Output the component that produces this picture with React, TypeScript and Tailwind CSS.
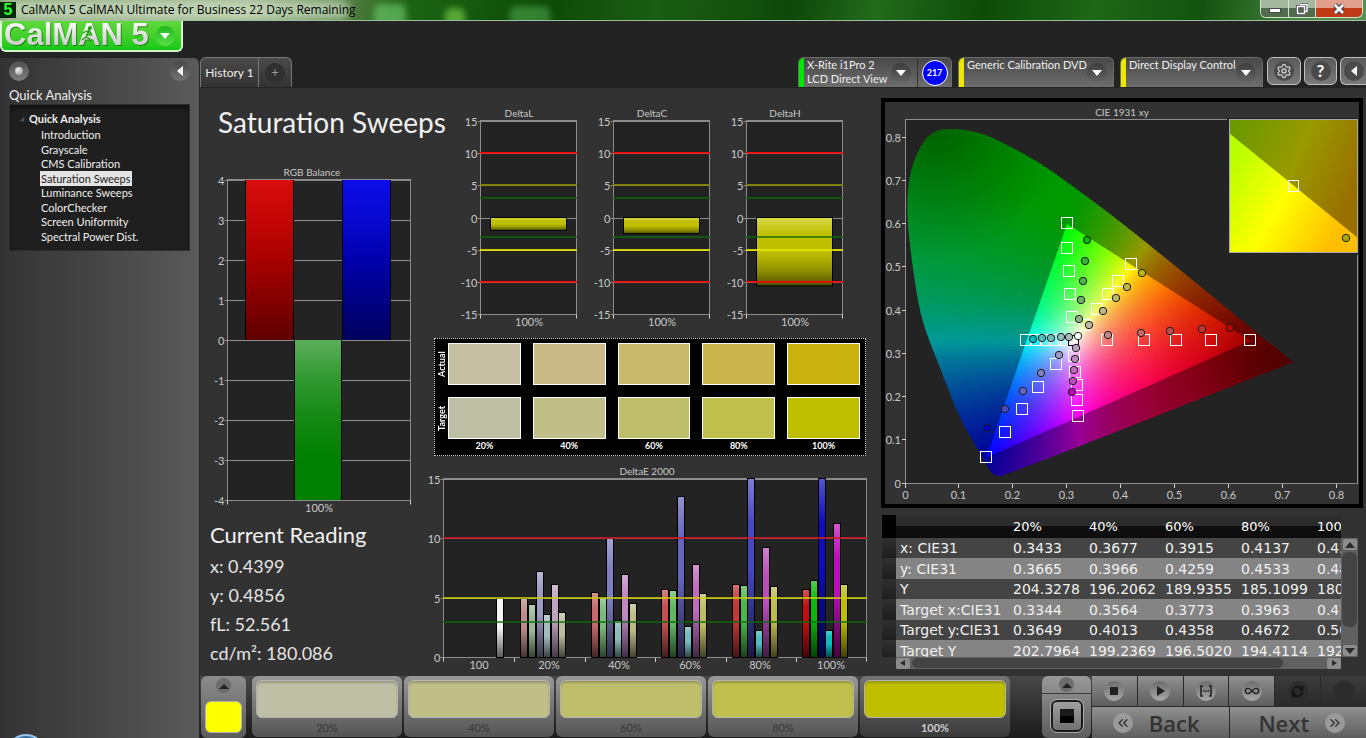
import type { ReactNode } from 'react';
import {
  ChevronsLeft,
  ChevronsRight,
  Infinity as InfinityIcon,
  RefreshCw,
  Settings,
} from 'lucide-react';

type Point = [number, number];

interface Scale {
  (value: number): number;
}

const GRID = '#8c8c8c';
const PLOT = '#232323';
const LABEL = '#c8c8c8';

const PAGES = [
  'Introduction',
  'Grayscale',
  'CMS Calibration',
  'Saturation Sweeps',
  'Luminance Sweeps',
  'ColorChecker',
  'Screen Uniformity',
  'Spectral Power Dist.',
];

const SWATCHES = [
  { label: '20%', actual: '#c6bea0', target: '#bfbfa5' },
  { label: '40%', actual: '#c9bb87', target: '#bfbf87' },
  { label: '60%', actual: '#c9b96b', target: '#bfbf6b' },
  { label: '80%', actual: '#cab54d', target: '#bfbf4d' },
  { label: '100%', actual: '#cab30f', target: '#bfbf00' },
];

const TABLE_COLUMNS = ['20%', '40%', '60%', '80%', '100%'];

const TABLE_ROWS = [
  { name: 'x: CIE31', values: ['0.3433', '0.3677', '0.3915', '0.4137', '0.4399'] },
  { name: 'y: CIE31', values: ['0.3665', '0.3966', '0.4259', '0.4533', '0.4856'] },
  { name: 'Y', values: ['204.3278', '196.2062', '189.9355', '185.1099', '180.0862'] },
  { name: 'Target x:CIE31', values: ['0.3344', '0.3564', '0.3773', '0.3963', '0.4193'] },
  { name: 'Target y:CIE31', values: ['0.3649', '0.4013', '0.4358', '0.4672', '0.5053'] },
  { name: 'Target Y', values: ['202.7964', '199.2369', '196.5020', '194.4114', '192.1470'] },
];

function VerticalGradient({ id, stops }: { id: string; stops: string[] }) {
  return (
    <linearGradient id={id} x1="0" y1="0" x2="0" y2="1">
      {stops.map((color, i) => (
        <stop key={i} offset={i / (stops.length - 1)} stopColor={color} />
      ))}
    </linearGradient>
  );
}

function ChartTitle({ x, y, children }: { x: number; y: number; children: ReactNode }) {
  return (
    <text x={x} y={y} fill={LABEL} textAnchor="middle" className="text-[10px]">
      {children}
    </text>
  );
}

function TickLabel({
  x,
  y,
  anchor = 'middle',
  children,
}: {
  x: number;
  y: number;
  anchor?: 'middle' | 'end';
  children: ReactNode;
}) {
  return (
    <text x={x} y={y} fill={LABEL} textAnchor={anchor} className="text-[11px]">
      {children}
    </text>
  );
}

// Frame, horizontal grid lines and left axis labels shared by the bar charts
function PlotFrame({
  left,
  right,
  top,
  bottom,
  ticks,
  scale,
}: {
  left: number;
  right: number;
  top: number;
  bottom: number;
  ticks: number[];
  scale: Scale;
}) {
  return (
    <g>
      <rect x={left} y={top} width={right - left} height={bottom - top} fill={PLOT} />
      {ticks.map((tick) => {
        const y = Math.floor(scale(tick)) + 0.5;
        return (
          <g key={tick}>
            <line x1={left - 3} x2={right} y1={y} y2={y} stroke={GRID} />
            <TickLabel x={left - 3} y={y + 4} anchor="end">
              {tick}
            </TickLabel>
          </g>
        );
      })}
      <rect
        x={left}
        y={top}
        width={right - left}
        height={bottom - top}
        fill="none"
        stroke={GRID}
      />
      <path d={`M${left} ${bottom}v4M${right} ${bottom}v4`} stroke="#d0d0d0" />
    </g>
  );
}

function RgbBalanceChart() {
  const scale: Scale = (v) => 180 - v * 40;
  return (
    <svg viewBox="0 0 228 360" className="mt-5 w-full" role="img" aria-label="RGB Balance">
      <defs>
        <VerticalGradient id="rgb-red" stops={['#d80c0c', '#c40606', '#a80000', '#840000', '#600000']} />
        <VerticalGradient id="rgb-green" stops={['#5caf5c', '#2f972f', '#128812', '#008000', '#008000']} />
        <VerticalGradient id="rgb-blue" stops={['#0c0ce8', '#0808d0', '#0000ac', '#000084', '#00005c']} />
      </defs>
      <ChartTitle x={112} y={16}>
        RGB Balance
      </ChartTitle>
      <PlotFrame
        left={27.5}
        right={210.5}
        top={19.5}
        bottom={340.5}
        ticks={[4, 3, 2, 1, 0, -1, -2, -3, -4]}
        scale={scale}
      />
      <rect x={45.5} y={20} width={48} height={160} fill="url(#rgb-red)" />
      <rect x={142.5} y={20} width={48} height={160} fill="url(#rgb-blue)" />
      <rect x={94.5} y={180} width={47} height={160} fill="url(#rgb-green)" />
      <path
        d="M45.5 20v160M93.5 20v160M142.5 20v160M190.5 20v160M94.5 180v160M141.5 180v160"
        stroke="#000"
      />
      <TickLabel x={119} y={352}>
        100%
      </TickLabel>
    </svg>
  );
}

const LIMITS = [
  { value: 10, color: '#ff0000', opacity: 1 },
  { value: 5, color: '#8a8a00', opacity: 0.85 },
  { value: 3, color: '#0a6b0a', opacity: 0.7 },
  { value: -3, color: '#0a6b0a', opacity: 0.7 },
  { value: -5, color: '#e6e600', opacity: 0.85 },
  { value: -10, color: '#ff0000', opacity: 1 },
];

function DeltaChart({ title, value }: { title: string; value: number }) {
  const scale: Scale = (v) => 113 - v * 6.45;
  const id = `delta-${title}`;
  return (
    <svg viewBox="0 0 133 225" className="w-full" role="img" aria-label={title}>
      <defs>
        <VerticalGradient id={id} stops={['#d8d84c', '#c0c000', '#c0c000', '#969600', '#505000']} />
      </defs>
      <ChartTitle x={67} y={12}>
        {title}
      </ChartTitle>
      <PlotFrame
        left={28.5}
        right={124.5}
        top={15.5}
        bottom={209.5}
        ticks={[15, 10, 5, 0, -5, -10, -15]}
        scale={scale}
      />
      <rect
        x={38.5}
        y={112.5}
        width={76}
        height={-value * 6.45}
        fill={`url(#${id})`}
        stroke="#000"
      />
      {LIMITS.map((limit) => (
        <rect
          key={limit.value}
          x={28}
          y={Math.floor(scale(limit.value)) - 1}
          width={97}
          height={Math.abs(limit.value) === 10 ? 1.6 : 2}
          fill={limit.color}
          opacity={limit.opacity}
        />
      ))}
      <TickLabel x={77} y={221}>
        100%
      </TickLabel>
    </svg>
  );
}

function SwatchPanel() {
  return (
    <div className="mr-[14px] ml-[6px] mt-2 grid h-[118px] grid-cols-[13px_1fr] grid-rows-[42px_42px_14px] gap-y-3 border border-dotted border-[#d0d0d0] bg-black pt-1 pr-[5px] text-[9px] font-bold text-white">
      <span className="flex rotate-180 items-center justify-center [writing-mode:vertical-rl]">
        Actual
      </span>
      <div className="grid grid-cols-5 gap-3">
        {SWATCHES.map((s) => (
          <div key={s.label} className="border border-white" style={{ backgroundColor: s.actual }} />
        ))}
      </div>
      <span className="flex rotate-180 items-center justify-center [writing-mode:vertical-rl]">
        Target
      </span>
      <div className="grid grid-cols-5 gap-3">
        {SWATCHES.map((s) => (
          <div key={s.label} className="border border-white" style={{ backgroundColor: s.target }} />
        ))}
      </div>
      <span className="-mt-3" />
      <div className="-mt-3 grid grid-cols-5 gap-3 pt-px text-center leading-3">
        {SWATCHES.map((s) => (
          <span key={s.label}>{s.label}</span>
        ))}
      </div>
    </div>
  );
}

// Red, green, blue, cyan, magenta, yellow for every saturation level
const DELTA_E = [
  {
    label: '20%',
    bars: [
      [4.9, '#c08a8a'], [4.45, '#96b896'], [7.2, '#9a9ac4'],
      [3.6, '#a4bcbc'], [6.1, '#bfa2bf'], [3.7, '#bcbca0'],
    ],
  },
  {
    label: '40%',
    bars: [
      [5.4, '#c46a6a'], [5.0, '#7cb87c'], [10, '#8080c0'],
      [3.1, '#8ebcbc'], [6.9, '#bf88bf'], [4.5, '#bcbc88'],
    ],
  },
  {
    label: '60%',
    bars: [
      [5.7, '#c45050'], [5.6, '#62b862'], [13.45, '#6666c0'],
      [2.6, '#74bcbc'], [7.8, '#bf6cbf'], [5.3, '#bcbc68'],
    ],
  },
  {
    label: '80%',
    bars: [
      [6.1, '#c43838'], [6.0, '#48b848'], [15, '#4848c0'],
      [2.25, '#54bcbc'], [9.2, '#bf4cbf'], [5.9, '#bcbc4c'],
    ],
  },
  {
    label: '100%',
    bars: [
      [5.65, '#c40c0c'], [6.4, '#0cb80c'], [15, '#0c0cc0'],
      [2.25, '#0cbcbc'], [11.2, '#bf0cbf'], [6.1, '#bcbc0c'],
    ],
  },
] as { label: string; bars: [number, string][] }[];

function DeltaEChart() {
  const scale: Scale = (v) => 193.5 - v * 11.9;
  const left = 15.5;
  const step = 70.5;

  const renderBar = (group: number, slot: number, value: number, color: string) => {
    const x = Math.round(left + group * step + 7.4 + slot * 7.6) - 0.5;
    const y = Math.round(scale(value)) - 0.5;
    const height = 193.5 - y;
    return (
      <g key={`${group}-${slot}`}>
        <rect x={x} y={y} width={7} height={height} fill={color} />
        <rect x={x} y={y} width={7} height={height} fill="url(#bar-shade)" stroke="#000" />
      </g>
    );
  };

  return (
    <svg viewBox="0 0 452 209" className="mt-2 w-full" role="img" aria-label="DeltaE 2000">
      <defs>
        <linearGradient id="bar-shade" x1="0" y1="0" x2="0" y2="1">
          <stop offset="0" stopColor="#fff" stopOpacity="0.3" />
          <stop offset="0.25" stopColor="#fff" stopOpacity="0" />
          <stop offset="0.5" stopColor="#000" stopOpacity="0" />
          <stop offset="1" stopColor="#000" stopOpacity="0.65" />
        </linearGradient>
      </defs>
      <ChartTitle x={219} y={11}>
        DeltaE 2000
      </ChartTitle>
      <PlotFrame
        left={left}
        right={438.5}
        top={14.5}
        bottom={193.5}
        ticks={[15, 10, 5, 0]}
        scale={scale}
      />
      {renderBar(0, 6, 4.9, '#f4f4f4')}
      {DELTA_E.map((group, g) =>
        group.bars.map(([value, color], slot) => renderBar(g + 1, slot, value, color))
      )}
      <rect x={15} y={73} width={424} height={2} fill="#c81c24" opacity={0.85} />
      <rect x={15} y={133} width={424} height={2} fill="#d2d200" opacity={0.75} />
      <rect x={15} y={157} width={424} height={2} fill="#0a6b0a" opacity={0.7} />
      {[1, 2, 3, 4, 5].map((i) => (
        <line
          key={i}
          x1={Math.round(left + i * step) + 0.5}
          x2={Math.round(left + i * step) + 0.5}
          y1={194}
          y2={198}
          stroke="#d0d0d0"
        />
      ))}
      <TickLabel x={51} y={205}>
        100
      </TickLabel>
      {DELTA_E.map((group, i) => (
        <TickLabel key={group.label} x={Math.round(50 + (i + 1) * step)} y={205}>
          {group.label}
        </TickLabel>
      ))}
    </svg>
  );
}

/* CIE 1931 diagram */

const cieX = (x: number) => 20.5 + x * 538.75;
const cieY = (y: number) => 381.5 - y * 432.5;

const WHITE: Point = [0.3127, 0.329];
const PRIMARIES: Point[] = [
  [0.64, 0.33],
  [0.3, 0.6],
  [0.15, 0.06],
];

// Spectral locus in plot pixels, starting at the red end
const LOCUS: Point[] = [
  [408, 260], [374, 233], [321, 189], [268, 146], [228, 114], [182, 80], [155, 61],
  [128, 46], [102, 33], [82, 28], [67, 27], [58, 27], [48, 30], [38, 40],
  [28, 60], [23, 83], [22, 116], [27, 160], [34, 206], [42, 233],
  [60, 278], [74, 315], [95, 351], [101, 362], [106, 370], [110, 374],
  [119, 374], [408, 260],
];

function smoothPath(points: Point[]) {
  let d = `M${points[0][0]} ${points[0][1]}`;
  for (let i = 1; i < points.length - 1; i++) {
    const [x, y] = points[i];
    const [nx, ny] = points[i + 1];
    d += `Q${x} ${y} ${(x + nx) / 2} ${(y + ny) / 2}`;
  }
  return `${d}L${points[0][0]} ${points[0][1]}Z`;
}

function chromaticityColor([x, y]: Point, level: number) {
  const z = 1 - x - y;
  const rgb = [
    3.2406 * x - 1.5372 * y - 0.4986 * z,
    -0.9689 * x + 1.8758 * y + 0.0415 * z,
    0.0557 * x - 0.204 * y + 1.057 * z,
  ].map((c) => Math.max(c, 0));
  const max = Math.max(...rgb);
  const [r, g, b] = rgb.map((c) => Math.round((255 * level * c) / max));
  return `rgb(${r},${g},${b})`;
}

// Distance from the white point to the edge of the gamut triangle
function edgeDistance(dx: number, dy: number) {
  let best = Infinity;
  PRIMARIES.forEach(([ax, ay], i) => {
    const [bx, by] = PRIMARIES[(i + 1) % 3];
    const ex = bx - ax;
    const ey = by - ay;
    const det = dx * ey - dy * ex;
    if (Math.abs(det) < 1e-9) return;
    const t = ((ax - WHITE[0]) * ey - (ay - WHITE[1]) * ex) / det;
    if (t > 0) best = Math.min(best, t);
  });
  return best;
}

const WEDGES = 300;
const OUTER_REACH = 0.45;
const INNER_STOPS = [0, 0.1, 0.2, 0.35, 0.5, 0.65, 0.8, 1];
const OUTER_STOPS = [0, 0.1, 0.2, 0.3, 0.45, 0.6, 0.8, 1];

const wedges = Array.from({ length: WEDGES }, (_, i) => {
  const a0 = (i / WEDGES) * Math.PI * 2;
  const a1 = ((i + 1) / WEDGES) * Math.PI * 2;
  const dx = Math.cos((a0 + a1) / 2);
  const dy = Math.sin((a0 + a1) / 2);
  const edge = edgeDistance(dx, dy);
  const at = (t: number): Point => [WHITE[0] + dx * t, WHITE[1] + dy * t];
  const plot = ([x, y]: Point): Point => [cieX(x), cieY(y)];
  const far = (a: number) => plot([WHITE[0] + Math.cos(a), WHITE[1] + Math.sin(a)]).join(' ');
  return {
    path: `M${plot(WHITE).join(' ')}L${far(a0)}L${far(a1)}Z`,
    start: plot(WHITE),
    edge: plot(at(edge)),
    end: plot(at(edge + OUTER_REACH)),
    inner: INNER_STOPS.map((s) => chromaticityColor(at(edge * s), 1)),
    outer: OUTER_STOPS.map((s) => chromaticityColor(at(edge + OUTER_REACH * s), 0.6)),
  };
});

function HueGradient({
  id,
  from,
  to,
  offsets,
  colors,
}: {
  id: string;
  from: Point;
  to: Point;
  offsets: number[];
  colors: string[];
}) {
  return (
    <linearGradient
      id={id}
      gradientUnits="userSpaceOnUse"
      x1={from[0]}
      y1={from[1]}
      x2={to[0]}
      y2={to[1]}
    >
      {colors.map((color, i) => (
        <stop key={i} offset={offsets[i]} stopColor={color} />
      ))}
    </linearGradient>
  );
}

const TARGETS: Point[] = [
  [182, 121], [182, 146], [184, 169], [185, 192], [187, 215],
  [246, 162], [233, 179], [223, 192], [212, 207], [200, 223],
  [222, 238], [259, 238], [291, 238], [326, 238], [365, 238],
  [141, 238], [151, 238], [161, 238], [170, 238], [179, 238],
  [171, 262], [153, 285], [137, 307], [120, 330], [101, 355],
  [189, 254], [190, 270], [192, 283], [192, 298], [193, 314],
];

const READINGS: [number, number, string][] = [
  [202, 138, '#00b400'], [200, 159, '#34b434'], [198, 179, '#50b450'],
  [196, 198, '#6cb46c'], [194, 217, '#88b488'],
  [257, 171, '#b8b800'], [242, 185, '#bcb84c'], [231, 196, '#bcb86b'],
  [218, 209, '#bcb887'], [204, 223, '#bcb8a0'],
  [345, 226, '#c00000'], [317, 227, '#c03434'], [285, 229, '#c05050'],
  [256, 231, '#c06a6a'], [223, 233, '#c08a8a'],
  [148, 237, '#00bcbc'], [157, 236, '#54bcbc'], [166, 236, '#74bcbc'],
  [176, 235, '#8ebcbc'], [184, 235, '#a4bcbc'],
  [102, 326, '#0000c0'], [120, 307, '#4848c0'], [138, 289, '#6666c0'],
  [156, 271, '#8080c0'], [174, 253, '#9a9ac4'],
  [187, 290, '#bf00bf'], [188, 279, '#bf4cbf'], [189, 268, '#bf6cbf'],
  [190, 257, '#bf88bf'], [191, 246, '#bfa2bf'],
  [193, 234, '#ffffff'],
];

const CIE_TICKS = [0, 0.1, 0.2, 0.3, 0.4, 0.5, 0.6, 0.7, 0.8];

function CieChart() {
  const triangle = PRIMARIES.map(([x, y]) => `${cieX(x)},${cieY(y)}`).join(' ');
  return (
    <div className="mr-[3px] ml-px border-4 border-black">
      <svg viewBox="0 0 474 402" className="block w-full" role="img" aria-label="CIE 1931 xy">
        <defs>
          <clipPath id="locus">
            <path d={smoothPath(LOCUS)} />
          </clipPath>
          <clipPath id="gamut">
            <polygon points={triangle} />
          </clipPath>
          {wedges.map((w, i) => (
            <g key={i}>
              <HueGradient id={`in-${i}`} from={w.start} to={w.edge} offsets={INNER_STOPS} colors={w.inner} />
              <HueGradient id={`out-${i}`} from={w.edge} to={w.end} offsets={OUTER_STOPS} colors={w.outer} />
            </g>
          ))}
          <radialGradient id="dim-red" gradientUnits="userSpaceOnUse" cx="408" cy="260" r="150">
            <stop offset="0" stopOpacity="0.5" />
            <stop offset="0.3" stopOpacity="0.38" />
            <stop offset="0.6" stopOpacity="0.16" />
            <stop offset="1" stopOpacity="0" />
          </radialGradient>
          <radialGradient id="dim-green" gradientUnits="userSpaceOnUse" cx="50" cy="27" r="130">
            <stop offset="0" stopOpacity="0.36" />
            <stop offset="1" stopOpacity="0" />
          </radialGradient>
          <linearGradient id="inset-dark" x1="0" y1="0" x2="1" y2="0.45">
            <stop offset="0" stopColor="#669900" />
            <stop offset="0.55" stopColor="#999900" />
            <stop offset="1" stopColor="#997000" />
          </linearGradient>
          <linearGradient id="inset-light" gradientUnits="userSpaceOnUse" x1="345" y1="60" x2="456" y2="125">
            <stop offset="0" stopColor="#b8ff00" />
            <stop offset="0.5" stopColor="#ffff00" />
            <stop offset="1" stopColor="#ffbe00" />
          </linearGradient>
        </defs>

        <ChartTitle x={237} y={14}>
          CIE 1931 xy
        </ChartTitle>
        <rect x={20.5} y={17.5} width={452} height={364} fill={PLOT} stroke={GRID} />

        <g clipPath="url(#locus)">
          {wedges.map((w, i) => (
            <path key={i} d={w.path} fill={`url(#out-${i})`} stroke={`url(#out-${i})`} />
          ))}
          <g clipPath="url(#gamut)">
            {wedges.map((w, i) => (
              <path
                key={i}
                d={w.path}
                fill={`url(#in-${i})`}
                stroke={`url(#in-${i})`}
                strokeWidth={0.5}
              />
            ))}
          </g>
          <rect x={21} y={18} width={451} height={363} fill="url(#dim-red)" />
          <rect x={21} y={18} width={451} height={363} fill="url(#dim-green)" />
        </g>

        {TARGETS.map(([x, y], i) => (
          <rect key={i} x={x - 5.5} y={y - 5.5} width={11} height={11} fill="none" stroke="#fff" />
        ))}
        <rect x={183.5} y={233.5} width={10} height={10} fill="none" stroke="#000" />
        {READINGS.map(([x, y, color], i) => (
          <circle key={i} cx={x} cy={y} r={3.7} fill={color} stroke="#1c1c1c" />
        ))}

        {CIE_TICKS.map((tick) => {
          const x = Math.round(cieX(tick)) - 0.5;
          const y = Math.round(cieY(tick)) - 0.5;
          return (
            <g key={tick}>
              <path d={`M${x} 382v4M17 ${y}h4`} stroke="#d0d0d0" />
              <TickLabel x={x} y={397}>
                {tick}
              </TickLabel>
              <TickLabel x={16} y={y + 4} anchor="end">
                {tick}
              </TickLabel>
            </g>
          );
        })}

        {/* magnified view of the selected point */}
        <g>
          <rect x={342} y={16} width={132} height={137} fill={PLOT} />
          <rect x={344} y={17} width={129} height={134} fill="url(#inset-dark)" />
          <polygon points="344,31 473,136 473,151 344,151" fill="url(#inset-light)" />
          <rect x={344.5} y={17.5} width={128} height={133} fill="none" stroke="#a8a8a8" />
          <rect x={403.5} y={78.5} width={10} height={11} fill="none" stroke="#fff" />
          <circle cx={461} cy={136} r={3.7} fill="#a8a800" stroke="#1c1c1c" />
        </g>
      </svg>
    </div>
  );
}

function ReadingsTable() {
  return (
    <div className="mt-[7px] mr-2 ml-[2px] grid grid-cols-[minmax(0,1fr)_17px] text-[14px] text-[#f0f0f0] [font-family:'DejaVu_Sans',sans-serif]">
      <div className="col-start-1 row-start-1 h-[142px] overflow-hidden">
        <table className="w-[507px] table-fixed border-collapse text-left whitespace-nowrap">
          <thead>
            <tr className="h-[23px] bg-gradient-to-b from-[#2c2c2c] from-50% to-[#0e0e0e] to-50%">
              <th className="w-[14px] bg-black p-0" />
              <th className="w-[113px] p-0" />
              {TABLE_COLUMNS.map((c) => (
                <th key={c} className="w-[76px] p-0 pl-1 text-[13px] leading-5 font-normal text-white">
                  {c}
                </th>
              ))}
            </tr>
          </thead>
          <tbody>
            {TABLE_ROWS.map((row) => (
              <tr key={row.name} className="h-5 bg-[#444] even:h-[21px] even:bg-[#848484]">
                <td className="bg-gradient-to-b from-[#303030] to-[#1e1e1e] p-0" />
                <th scope="row" className="p-0 pl-1 leading-5 font-normal">
                  {row.name}
                </th>
                {row.values.map((v, i) => (
                  <td key={i} className="p-0 pl-1 leading-5">
                    {v}
                  </td>
                ))}
              </tr>
            ))}
          </tbody>
        </table>
      </div>
      <div className="col-start-2 row-start-1 mt-[23px] flex flex-col items-center bg-[#606060] py-px">
        <ScrollButton label="Scroll up" points="5,0 10,6 0,6" />
        <div className="mt-0.5 h-[75px] w-[15px] rounded-md bg-[#444]" />
        <div className="mt-auto">
          <ScrollButton label="Scroll down" points="0,0 10,0 5,6" />
        </div>
      </div>
      <div className="col-start-1 row-start-2 ml-[14px] flex h-3 items-center bg-[#606060]">
        <ScrollButton label="Scroll left" points="7,0 7,6 2,3" />
        <div className="mx-0.5 h-[10px] w-5/6 rounded-md bg-[#444]" />
        <div className="ml-auto flex">
          <ScrollButton label="Scroll right" points="3,0 3,6 8,3" />
        </div>
      </div>
    </div>
  );
}

function ScrollButton({ label, points }: { label: string; points: string }) {
  return (
    <button
      type="button"
      aria-label={label}
      className="flex h-[11px] w-[14px] items-center justify-center rounded-xs bg-[#8c8c8c]"
    >
      <svg viewBox="0 0 10 6" className="h-[6px] w-[10px]">
        <polygon points={points} fill="#2a2a2a" />
      </svg>
    </button>
  );
}

function Arrow({ direction }: { direction: 'down' | 'left' | 'up' }) {
  const shapes = {
    down: '0,2 10,2 5,8',
    left: '8,0 8,10 2,5',
    up: '0,8 10,8 5,3',
  };
  return (
    <svg viewBox="0 0 10 10" className="size-[10px]">
      <polygon points={shapes[direction]} fill="currentColor" />
    </svg>
  );
}

function TitleBar() {
  return (
    <header className="relative flex h-[21px] shrink-0 items-center overflow-hidden border-b border-[#9fc09f]">
      <div className="absolute inset-0 bg-[linear-gradient(100deg,#7f9f6c_0%,#9ab38a_18%,#4a7a3a_26%,#1d6414_30%,#0d4a08_40%,#1b5d14_48%,#0e480a_58%,#226a1c_64%,#0d4b09_72%,#1f6718_80%,#135210_88%,#4f8a48_96%,#5c8f56_100%)]" />
      <div className="absolute top-1 left-[374px] h-6 w-8 rounded-md bg-[#6fd06f] opacity-60 blur-[3px]" />
      <div className="absolute top-2 left-[445px] h-6 w-5 rounded-md bg-[#7fd84a] opacity-60 blur-[3px]" />
      <div className="absolute top-1.5 left-[510px] h-6 w-10 rounded-md bg-[#58b858] opacity-50 blur-[3px]" />
      <div className="absolute top-0 left-0 h-5 w-[350px] rounded-full bg-[#dcebd4] opacity-60 blur-[4px]" />
      <span className="relative mr-[5px] flex h-4 w-4 items-center justify-center bg-[#062806] text-[16px] leading-4 font-bold text-[#30ff30] [font-family:'Liberation_Sans',sans-serif]">
        5
      </span>
      <h1 className="relative text-[12px] leading-5 text-black [font-family:'Open_Sans',sans-serif]">
        CalMAN 5 CalMAN Ultimate for Business 22 Days Remaining
      </h1>
      <div className="relative mr-[3px] ml-auto flex h-[18px] self-start overflow-hidden rounded-b-md border border-t-0 border-[#d4e4d0]">
        <button
          type="button"
          aria-label="Minimize"
          className="flex w-7 items-center justify-center border-r border-[#d4e4d0] bg-gradient-to-b from-[#a4b8a0] from-45% to-[#506c4c] to-50%"
        >
          <span className="mt-1 h-[5px] w-3 border border-[#445] bg-white" />
        </button>
        <button
          type="button"
          aria-label="Restore"
          className="flex w-[27px] items-center justify-center border-r border-[#d4e4d0] bg-gradient-to-b from-[#a4b8a0] from-45% to-[#506c4c] to-50%"
        >
          <svg viewBox="0 0 12 12" className="size-3">
            <path d="M4 1.500h7v7h-2M1.500 3.500h7v7h-7z" fill="none" stroke="#445" strokeWidth="3" />
            <path d="M4 1.500h7v7h-2M1.500 3.500h7v7h-7z" fill="none" stroke="#fff" strokeWidth="1.500" />
          </svg>
        </button>
        <button
          type="button"
          aria-label="Close"
          className="flex w-[46px] items-center justify-center bg-gradient-to-b from-[#e0a08c] from-45% to-[#c03a18] to-50%"
        >
          <svg viewBox="0 0 14 12" className="h-3 w-[14px]">
            <path d="M3 2l8 8M11 2l-8 8" stroke="#445" strokeWidth="5" />
            <path d="M3 2l8 8M11 2l-8 8" stroke="#fff" strokeWidth="2.600" />
          </svg>
        </button>
      </div>
    </header>
  );
}

function LogoBar() {
  return (
    <div className="h-9 shrink-0">
      <button
        type="button"
        aria-label="CalMAN 5 menu"
        className="relative flex h-[31px] w-[183px] items-start rounded-b-md border-2 border-t-0 border-[#d8f8d0] bg-gradient-to-b from-[#5fd83c] to-[#10c814] pl-[2px] text-left"
      >
        <span className="bg-gradient-to-b from-white to-[#c4c4c4] bg-clip-text text-[31px] leading-[28px] font-bold whitespace-nowrap text-transparent [font-family:'Liberation_Sans',sans-serif] drop-shadow-[1px_1px_0_rgba(0,0,0,0.35)]">
          CalMAN 5
        </span>
        <svg viewBox="0 0 16 18" className="absolute top-1 left-[78px] h-[18px] w-4">
          <circle cx="10" cy="3" r="2" fill="#2a9c1c" />
          <path
            d="M3 8l4-2 3 1 2 3M8 7l-2 5 4 2v3M6 12l-4 3"
            fill="none"
            stroke="#2a9c1c"
            strokeWidth="1.300"
          />
        </svg>
        <span className="absolute top-[5px] right-[6px] flex size-5 items-center justify-center rounded-full bg-gradient-to-b from-[#18b818] to-[#58e048] text-white">
          <Arrow direction="down" />
        </span>
      </button>
    </div>
  );
}

function Sidebar() {
  return (
    <aside className="relative mt-px w-[200px] shrink-0 overflow-hidden rounded-tr-md border-r border-[#262626] bg-gradient-to-r from-[#333] to-[#5a5a5a] px-[9px]">
      <div className="flex items-center justify-between pt-[3px]">
        <span className="flex size-5 items-center justify-center rounded-full bg-gradient-to-b from-[#505050] to-[#808080]">
          <span className="size-2 rounded-full bg-[radial-gradient(circle_at_35%_35%,#f0f0f0,#888)]" />
        </span>
        <button
          type="button"
          aria-label="Collapse sidebar"
          className="flex size-5 items-center justify-center rounded-full bg-gradient-to-b from-[#484848] to-[#747474] text-white"
        >
          <Arrow direction="left" />
        </button>
      </div>
      <h2 className="pt-1 text-[13px] leading-5 text-[#eee]">Quick Analysis</h2>
      <nav className="mt-[-1px] h-[147px] border border-[#2c2c2c] bg-[#1f1f1f] pt-[7px] pl-[9px] text-[11px] text-[#eee] shadow-[inset_0_3px_4px_#111]">
        <div className="flex items-center leading-[14px] font-bold">
          <svg viewBox="0 0 8 8" className="mr-1 size-[6px]">
            <path d="M7 1v6H1z" fill="#555" />
          </svg>
          Quick Analysis
        </div>
        <ul className="pt-px pl-[21px]">
          {PAGES.map((page) => (
            <li key={page} className="-mb-px h-[15px] leading-[15px] [&:nth-child(odd)]:mb-0">
              <a
                href={`#${page}`}
                className={
                  page === 'Saturation Sweeps'
                    ? 'inline-block bg-[#e4e4e4] px-px text-[#222]'
                    : 'inline-block px-px'
                }
              >
                {page}
              </a>
            </li>
          ))}
        </ul>
      </nav>
      <div className="absolute -bottom-9 left-[6px] size-10 rounded-full border-2 border-[#9cc4e8] bg-[#3a6ea0]" />
    </aside>
  );
}

function DeviceButton({
  bar,
  width,
  lines,
  children,
}: {
  bar: string;
  width: string;
  lines: string[];
  children?: ReactNode;
}) {
  return (
    <div
      className={`flex h-[30px] overflow-hidden rounded-t-md border border-b-0 border-[#6c6c6c] bg-gradient-to-b from-[#484848] to-[#6e6e6e] ${width}`}
    >
      <button type="button" aria-haspopup="menu" className="flex min-w-0 flex-1 text-left">
        <span className={`mr-[3px] h-full w-[5px] shrink-0 ${bar}`} />
        <span className="flex-1 text-[11px] leading-[14px] whitespace-nowrap text-[#eee]">
          {lines.map((line) => (
            <span key={line} className="block">
              {line}
            </span>
          ))}
        </span>
        <span className="mt-[5px] mr-[6px] flex size-5 shrink-0 items-center justify-center rounded-full bg-gradient-to-b from-[#3c3c3c] to-[#666] text-white">
          <Arrow direction="down" />
        </span>
      </button>
      {children}
    </div>
  );
}

const squareButton =
  'flex h-7 items-center justify-center rounded-md border border-[#c0c0c0] bg-gradient-to-b from-[#5a5a5a] to-[#7a7a7a] text-white';

function TabRow() {
  return (
    <div className="flex h-[31px] shrink-0 items-start">
      <div className="flex h-[30px] rounded-t-md border border-b-0 border-[#777] bg-gradient-to-b from-[#4a4a4a] to-[#333]">
        <button type="button" className="w-[58px] border-r border-[#777] text-[12px] text-[#eee]">
          History 1
        </button>
        <button type="button" aria-label="Add history" className="flex w-8 items-center justify-center">
          <span className="flex size-5 items-center justify-center rounded-full bg-[#303030] text-[13px] text-[#999]">
            +
          </span>
        </button>
      </div>
      <div className="ml-auto flex items-start">
        <DeviceButton bar="bg-[#00e800]" width="w-[154px]" lines={['X-Rite i1Pro 2', 'LCD Direct View']}>
          <div className="flex w-[34px] shrink-0 items-center justify-center border-l border-[#333]">
            <span className="flex size-[26px] items-center justify-center rounded-full border border-white bg-[#0000ff] text-[9px] font-bold text-white">
              217
            </span>
          </div>
        </DeviceButton>
        <div className="ml-1.5 flex">
          <DeviceButton bar="bg-[#ece800]" width="w-[156px]" lines={['Generic Calibration DVD']} />
        </div>
        <div className="ml-1.5 flex">
          <DeviceButton bar="bg-[#ece800]" width="w-[143px]" lines={['Direct Display Control']} />
        </div>
        <button type="button" aria-label="Settings" className={`ml-1 w-[34px] ${squareButton}`}>
          <span className="flex size-5 items-center justify-center rounded-full bg-[#4a4a4a]">
            <Settings className="size-4 text-[#ccc]" />
          </span>
        </button>
        <button type="button" aria-label="Help" className={`ml-[3px] w-[33px] ${squareButton}`}>
          <span className="flex size-5 items-center justify-center rounded-full bg-[#4a4a4a] text-[17px] leading-5 font-bold">
            ?
          </span>
        </button>
        <button
          type="button"
          aria-label="Collapse toolbar"
          className={`ml-[3px] w-[26px] rounded-r-none border-r-0 ${squareButton}`}
        >
          <span className="flex size-5 items-center justify-center rounded-full bg-[#4a4a4a]">
            <Arrow direction="left" />
          </span>
        </button>
      </div>
    </div>
  );
}

function TransportButton({
  label,
  disabled = false,
  children,
}: {
  label: string;
  disabled?: boolean;
  children?: ReactNode;
}) {
  return (
    <button
      type="button"
      aria-label={label}
      disabled={disabled}
      className={
        disabled
          ? 'flex items-center justify-center bg-gradient-to-b from-[#3c3c3c] to-[#2a2a2a] text-[#161616]'
          : 'flex items-center justify-center bg-gradient-to-b from-[#909090] to-[#5e5e5e] text-[#222]'
      }
    >
      <span
        className={
          disabled
            ? 'flex size-5 items-center justify-center rounded-full bg-[#2c2c2c]'
            : 'flex size-5 items-center justify-center rounded-full bg-gradient-to-b from-[#6c6c6c] to-[#a8a8a8]'
        }
      >
        {children}
      </span>
    </button>
  );
}

function BottomBar() {
  return (
    <footer className="mt-auto flex h-[62px] shrink-0 bg-gradient-to-b from-[#484848] to-[#1c1c1c]">
      <button
        type="button"
        aria-label="Current patch"
        className="ml-px flex w-[45px] shrink-0 flex-col items-center rounded-md bg-gradient-to-b from-[#8c8c8c] to-[#5c5c5c]"
      >
        <span className="mt-[2px] flex size-[15px] items-center justify-center rounded-full bg-[#6c6c6c] text-[#222]">
          <Arrow direction="up" />
        </span>
        <span className="mt-2 h-8 w-[37px] rounded-md border border-[#b0b0b0] bg-[#ffff00]" />
      </button>
      <div className="ml-1.5 flex min-w-0 flex-1 gap-0.5">
        {SWATCHES.map((s) => {
          const selected = s.label === '100%';
          return (
            <button
              key={s.label}
              type="button"
              className={
                selected
                  ? 'flex h-[61px] flex-1 flex-col rounded-md bg-gradient-to-b from-[#747474] to-[#3a3a3a] px-1 pt-1 text-[11px] font-bold text-[#ccc]'
                  : 'flex h-[61px] flex-1 flex-col rounded-md bg-gradient-to-b from-[#999] to-[#545454] px-1 pt-1 text-[11px] text-[#3a3a3a]'
              }
            >
              <span
                className="h-[38px] w-full rounded-md border border-[#b4b4b4] shadow-[inset_0_2px_2px_rgba(0,0,0,0.2)]"
                style={{ backgroundColor: s.target }}
              />
              <span className="w-full pt-0.5 leading-4">{s.label}</span>
            </button>
          );
        })}
      </div>
      <div className="ml-8 flex w-[324px] shrink-0">
        <div className="flex w-[49px] flex-col rounded-md bg-gradient-to-b from-[#999] to-[#5c5c5c]">
          <button
            type="button"
            aria-label="Expand"
            className="flex h-[18px] items-center justify-center border-b border-[#3a3a3a] text-[#222]"
          >
            <span className="flex size-[15px] items-center justify-center rounded-full bg-[#6c6c6c]">
              <Arrow direction="up" />
            </span>
          </button>
          <button type="button" aria-label="Pattern window" className="flex flex-1 items-center justify-center">
            <span className="flex size-[32px] items-center justify-center rounded-md border-2 border-[#1c1c1c] bg-gradient-to-b from-[#a0a0a0] to-[#707070] outline outline-[#aaa]">
              <span className="size-[14px] bg-gradient-to-b from-[#1a1a1a] from-50% to-black to-50%" />
            </span>
          </button>
        </div>
        <div className="ml-px grid flex-1 grid-rows-[30px_31px] gap-px bg-[#2a2a2a]">
          <div className="grid grid-cols-6 gap-px">
            <TransportButton label="Stop">
              <span className="size-2 bg-[#222]" />
            </TransportButton>
            <TransportButton label="Play">
              <svg viewBox="0 0 10 12" className="ml-0.5 h-3 w-[10px]">
                <path d="M1 1l8 5-8 5z" fill="currentColor" />
              </svg>
            </TransportButton>
            <TransportButton label="Read series">
              <svg viewBox="0 0 14 12" className="h-3 w-[14px]" fill="none" stroke="currentColor" strokeWidth="1.600">
                <path d="M4 1H2v10h2M10 1h2v10h-2" />
                <path d="M4 6h6" strokeDasharray="1.500 0.800" />
              </svg>
            </TransportButton>
            <TransportButton label="Read continuously">
              <InfinityIcon className="size-4" />
            </TransportButton>
            <TransportButton label="Refresh" disabled>
              <RefreshCw className="size-[13px]" strokeWidth={4} />
            </TransportButton>
            <TransportButton label="Unused" disabled />
          </div>
          <div className="grid grid-cols-2 gap-px text-[22px] text-[#333] [font-family:'Open_Sans',sans-serif]">
            <button
              type="button"
              className="flex items-center justify-center gap-4 bg-gradient-to-b from-[#909090] to-[#5e5e5e] pr-2 font-semibold"
            >
              <span className="flex size-5 items-center justify-center rounded-full bg-[#9a9a9a]">
                <ChevronsLeft className="size-4" />
              </span>
              <span className="leading-[30px]">Back</span>
            </button>
            <button
              type="button"
              className="flex items-center justify-center gap-4 bg-gradient-to-b from-[#909090] to-[#5e5e5e] pl-2 font-semibold"
            >
              <span className="leading-[30px]">Next</span>
              <span className="flex size-5 items-center justify-center rounded-full bg-[#9a9a9a]">
                <ChevronsRight className="size-4" />
              </span>
            </button>
          </div>
        </div>
      </div>
    </footer>
  );
}

export default function App() {
  return (
    <div className="flex min-h-screen flex-col bg-[#232323] [font-family:Lato,sans-serif]">
      <TitleBar />
      <LogoBar />
      <div className="flex flex-1">
        <Sidebar />
        <div className="flex min-w-0 flex-1 flex-col">
          <TabRow />
          <main className="grid flex-1 grid-cols-[228fr_452fr_486fr] items-start bg-[#323232]">
            <section className="min-w-0 pt-4 text-[#f0f0f0]">
              <h2 className="pl-[18px] text-[28px] leading-9 whitespace-nowrap">Saturation Sweeps</h2>
              <RgbBalanceChart />
              <div className="pl-[10px]">
                <h3 className="text-[22px] leading-[30px]">Current Reading</h3>
                <div className="mt-0.5 text-[18px] leading-[29px] text-[#e4e4e4]">
                  <p>x: 0.4399</p>
                  <p>y: 0.4856</p>
                  <p>fL: 52.561</p>
                  <p>cd/m²: 180.086</p>
                </div>
              </div>
            </section>
            <section className="min-w-0 pt-[17px]">
              <div className="grid grid-cols-3 pr-[29px] pl-6">
                <DeltaChart title="DeltaL" value={-2} />
                <DeltaChart title="DeltaC" value={-2.5} />
                <DeltaChart title="DeltaH" value={-10.6} />
              </div>
              <SwatchPanel />
              <DeltaEChart />
            </section>
            <section className="min-w-0 pt-[10px]">
              <CieChart />
              <ReadingsTable />
            </section>
          </main>
          <BottomBar />
        </div>
      </div>
    </div>
  );
}
